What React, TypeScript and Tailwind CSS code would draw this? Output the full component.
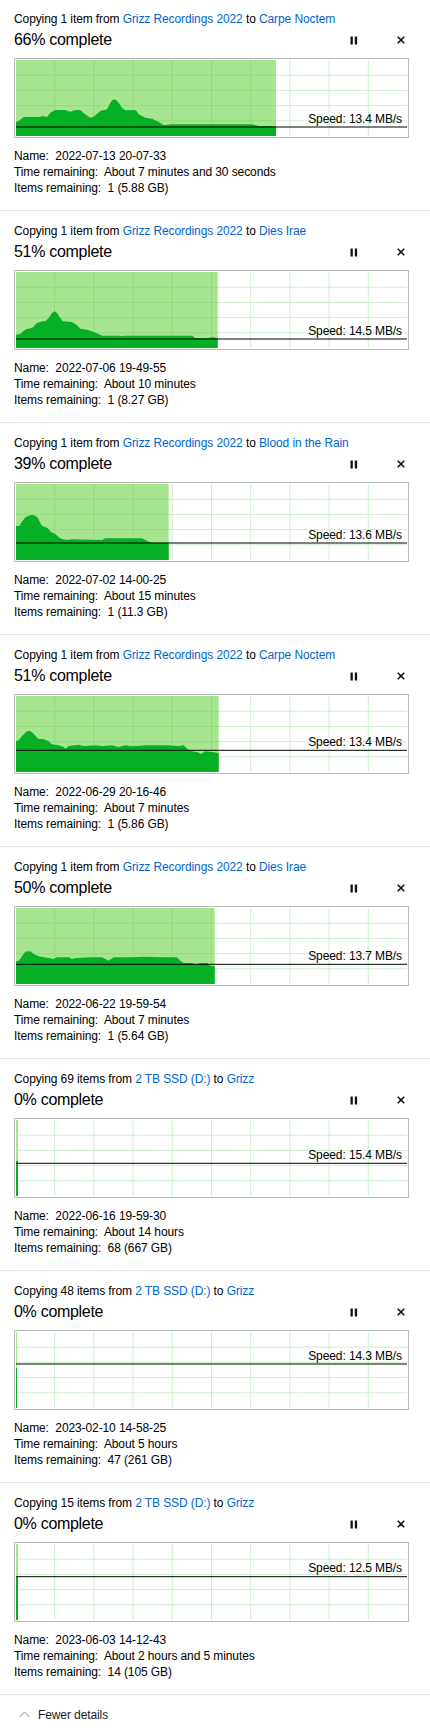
type Job = {
  count: string;
  from: string;
  to: string;
  pct: number;
  speed: string;
  name: string;
  time: string;
  items: string;
  fill: number;
  line: number;
  area?: string;
  dark?: number;
};

const jobs: Job[] = [
  {
    count: "1 item", from: "Grizz Recordings 2022", to: "Carpe Noctem", pct: 66, speed: "13.4 MB/s",
    name: "2022-07-13 20-07-33", time: "About 7 minutes and 30 seconds", items: "1 (5.88 GB)",
    fill: 260, line: 67,
    area: "0,62 2.7,61 7.7,57 24.3,57 26,56 31,57 34.3,52.7 39.3,50 49.3,50 54.3,51.7 59.3,50 64.3,50 67.7,53.3 74.3,57.7 77.7,56.7 84.3,51 91,49.3 92.7,46 96,40.3 99.3,39.3 102.7,42.7 106,47.7 109.3,50.3 116,50 120,50.3 122.7,54.3 129.3,57.7 136,58.7 142.7,62 147.7,65 156,64.3 236,64.3 242.7,66 256,66 260,66.7",
  },
  {
    count: "1 item", from: "Grizz Recordings 2022", to: "Dies Irae", pct: 51, speed: "14.5 MB/s",
    name: "2022-07-06 19-49-55", time: "About 10 minutes", items: "1 (8.27 GB)",
    fill: 201.7, line: 67,
    area: "0,62.7 4.3,62 7.7,58.7 11,57 16,56 21,51 26,49.3 29.3,49.3 32.7,46 36,41 38.7,39.3 41,41 44.3,46 46.7,49.3 56,50 61,53.3 64.3,56.7 71,57.7 76,59.3 82.7,62 86,63.7 102.7,63.7 106,64.3 109.3,63.7 176,63.7 179.3,66 192.7,66 196,65.3 201.7,66",
  },
  {
    count: "1 item", from: "Grizz Recordings 2022", to: "Blood in the Rain", pct: 39, speed: "13.6 MB/s",
    name: "2022-07-02 14-00-25", time: "About 15 minutes", items: "1 (11.3 GB)",
    fill: 152.7, line: 59,
    area: "0,42 3.3,42 6,37.7 9.3,33.3 12.7,31.7 16,31 19.3,31.7 22,34.3 25.3,41 27.7,42.7 31,43.7 35.3,48.3 39.3,50 42.7,53.3 46,55 51,56 56,55.3 86,56 89.3,54.3 126,54.3 129.3,56 132.7,57.7 136,58.7 152.7,58.7",
  },
  {
    count: "1 item", from: "Grizz Recordings 2022", to: "Carpe Noctem", pct: 51, speed: "13.4 MB/s",
    name: "2022-06-29 20-16-46", time: "About 7 minutes", items: "1 (5.86 GB)",
    fill: 202.7, line: 54.3,
    area: "0,45 2.7,44.3 6,40 11,35.3 14.3,35 17.7,37.7 22,42.7 27.7,43.3 32.7,45.3 36,48.3 42.7,49.3 47.7,51 49.3,52.7 52.7,50 62.7,48.7 67.7,50 79.3,49.3 86,50 96,49.3 102.7,51 109.3,49.3 116,50.3 129.3,49.3 152.7,49.3 162.7,50 167.7,49.3 171,52.7 176,55.3 181,56 185.3,57.7 189.3,55.3 196,56 202.7,57",
  },
  {
    count: "1 item", from: "Grizz Recordings 2022", to: "Dies Irae", pct: 50, speed: "13.7 MB/s",
    name: "2022-06-22 19-59-54", time: "About 7 minutes", items: "1 (5.64 GB)",
    fill: 198.7, line: 56.3,
    area: "0,53.3 2.7,52.7 6,48.3 9.3,43.7 14.3,43.3 17.7,46 22.7,48.3 27.7,49.3 34.3,50.3 37.7,51 41,49.3 52.7,49.3 56,51 59.3,50 76,49.3 86,49.3 92.7,52.7 97.7,49.3 116,49.3 129.3,48.7 146,49.3 161,49.3 164.3,52.7 167.7,55 176,55 179.3,56.7 184.3,55 191,55 194.3,57.7 198.7,58",
  },
  {
    count: "69 items", from: "2 TB SSD (D:)", to: "Grizz", pct: 0, speed: "15.4 MB/s",
    name: "2022-06-16 19-59-30", time: "About 14 hours", items: "68 (667 GB)",
    fill: 2, line: 43.3, dark: 41,
  },
  {
    count: "48 items", from: "2 TB SSD (D:)", to: "Grizz", pct: 0, speed: "14.3 MB/s",
    name: "2023-02-10 14-58-25", time: "About 5 hours", items: "47 (261 GB)",
    fill: 1, line: 32, dark: 36,
  },
  {
    count: "15 items", from: "2 TB SSD (D:)", to: "Grizz", pct: 0, speed: "12.5 MB/s",
    name: "2023-06-03 14-12-43", time: "About 2 hours and 5 minutes", items: "14 (105 GB)",
    fill: 2, line: 32.7, dark: 33,
  },
];

const W = 391;
const H = 76;
const cols = [1, 2, 3, 4, 5, 6, 7, 8, 9].map((i) => i * 39.2 - 0.5);
const rows = [1, 2, 3, 4].map((i) => i * 15.2);

function Chart({ job }: { job: Job }) {
  return (
    <div className="relative w-[395px] h-[80px] border border-[#bcbcbc] bg-white p-px">
      <svg width={W} height={H} className="block">
        {cols.map((x) => (
          <line key={"c" + x} x1={x} x2={x} y1={0} y2={H} stroke="#ccf0cc" strokeWidth={1} />
        ))}
        {rows.map((y) => (
          <line key={"r" + y} x1={0} x2={W} y1={y} y2={y} stroke="#ccf0cc" strokeWidth={1} />
        ))}
        {job.area ? (
          <>
            <rect x={0} y={0} width={job.fill} height={H} fill="#a8e590" />
            {cols
              .filter((x) => x < job.fill)
              .map((x) => (
                <line key={"fc" + x} x1={x} x2={x} y1={0} y2={H} stroke="#8fdc7c" strokeWidth={1} />
              ))}
            {rows.map((y) => (
              <line key={"fr" + y} x1={0} x2={job.fill} y1={y} y2={y} stroke="#8fdc7c" strokeWidth={1} />
            ))}
            <path d={`M0,${H} L${job.area.split(" ").join(" L")} L${job.fill},${H} Z`} fill="#06b025" />
          </>
        ) : (
          <>
            <rect x={0} y={0} width={job.fill} height={job.dark} fill="#a8e590" />
            <rect x={0} y={job.dark} width={job.fill} height={H - (job.dark ?? 0)} fill="#06b025" />
          </>
        )}
        <line x1={0} x2={W} y1={job.line} y2={job.line} stroke="#000" strokeWidth={1} />
      </svg>
      <span
        className="absolute right-[6px] text-[12px] leading-4 text-black whitespace-nowrap"
        style={{ top: job.line - 15.5 }}
      >
        Speed: {job.speed}
      </span>
    </div>
  );
}

function CopyJob({ job }: { job: Job }) {
  return (
    <div className="h-[211px] border-b border-[#e5e5e5] mb-px pt-[11px] px-[14px]">
      <div className="text-[12px] leading-4 text-black whitespace-nowrap">
        Copying {job.count} from <span className="text-[#0066cc]">{job.from}</span> to{" "}
        <span className="text-[#0066cc]">{job.to}</span>
      </div>
      <div className="mt-[2px] h-[22px] w-[395px] flex items-center">
        <div className="flex-1 text-[16px] leading-[22px] tracking-[-0.3px] text-black">{job.pct}% complete</div>
        <svg width="8" height="9" viewBox="0 0 8 9" className="block">
          <rect x="0.5" y="0.5" width="2.3" height="8" fill="#111" />
          <rect x="4.8" y="0.5" width="2.3" height="8" fill="#111" />
        </svg>
        <svg width="8" height="8" viewBox="0 0 8 8" className="block ml-[39px] mr-[4px]">
          <path d="M0.7,0.7 L7.3,7.3 M7.3,0.7 L0.7,7.3" stroke="#111" strokeWidth="1.6" />
        </svg>
      </div>
      <div className="mt-[7px]">
        <Chart job={job} />
      </div>
      <div className="mt-[10px] text-[12px] leading-4 text-black whitespace-pre">
        <div>{"Name:  " + job.name}</div>
        <div>{"Time remaining:  " + job.time}</div>
        <div>{"Items remaining:  " + job.items}</div>
      </div>
    </div>
  );
}

export default function App() {
  return (
    <div className="w-[430px] bg-white tracking-[-0.1px] font-['Liberation_Sans',Arial,sans-serif]">
      {jobs.map((job, i) => (
        <CopyJob key={i} job={job} />
      ))}
      <div className="h-[38px] flex items-center pl-[19px] pb-[1px]">
        <svg width="11" height="7" viewBox="0 0 11 7" className="block">
          <path d="M0.5,6 L5.5,1 L10.5,6" fill="none" stroke="#8a8a8a" strokeWidth="1" />
        </svg>
        <span className="ml-[8px] text-[12px] leading-4 text-[#1a1a1a]">Fewer details</span>
      </div>
    </div>
  );
}
